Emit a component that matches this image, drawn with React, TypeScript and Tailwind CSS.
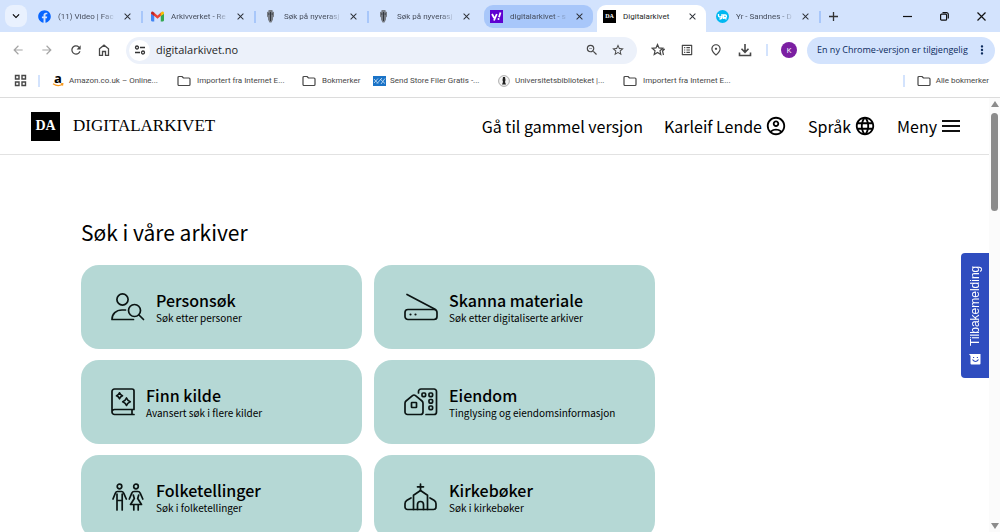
import type { ReactNode } from 'react';
import {
  MdArrowBack,
  MdArrowForward,
  MdClose,
  MdKeyboardArrowDown,
  MdLanguage,
  MdMoreVert,
  MdOutlineAccountCircle,
  MdOutlineListAlt,
  MdOutlinePlace,
  MdRefresh,
  MdStarBorder,
  MdZoomOut,
} from 'react-icons/md';
import { FaFacebook } from 'react-icons/fa';

const GmailIcon = () => (
  <svg viewBox="0 0 24 24" className="size-[13px]">
    <path fill="#4285f4" d="M0 7v12a2 2 0 0 0 2 2h4V10z" />
    <path fill="#34a853" d="M24 7v12a2 2 0 0 1-2 2h-4V10z" />
    <path fill="#ea4335" d="M5 4l7 6 7-6v6l-7 6-7-6z" />
    <path fill="#c5221f" d="M0 6c0-3 3-4 5-2l1 1v6L0 7z" />
    <path fill="#fbbc04" d="M24 6c0-3-3-4-5-2l-1 1v6l6-4z" />
  </svg>
);

const CrestIcon = () => (
  <svg viewBox="0 0 13 13" className="size-[13px]">
    <path fill="#777c84" d="M4.500 0h4v1.500L10 2v4.500L9 7.500v2L7.500 12.500h-2L4 9.500v-2L3 6.500V2l1.500-.5z" />
    <path fill="none" stroke="#31353c" d="M6.500 2v9M4 4h1.500M7.500 4H9" />
  </svg>
);

const YahooIcon = () => (
  <svg viewBox="0 0 13 13" className="size-[13px]">
    <rect width="13" height="13" fill="#5f01d1" />
    <path fill="none" stroke="#fff" strokeWidth="1.800" d="M2 4l2.200 4M6.800 4L4 10.500M10.500 2.500L9 7.300" />
    <circle cx="8.500" cy="9" r="1" fill="#fff" />
  </svg>
);

const DaIcon = () => (
  <span className="flex size-[13px] items-center justify-center bg-black font-['Liberation_Serif',serif] text-[6px] font-bold text-white">
    DA
  </span>
);

const YrIcon = () => (
  <svg viewBox="0 0 13 13" className="size-[13px]">
    <circle cx="6.500" cy="6.500" r="6.500" fill="#00b8f1" />
    <path
      fill="none"
      stroke="#fff"
      strokeWidth="1.300"
      d="M2.500 4v1.500q0 1.500 1.700 1.500T6 5.500V4M6 5v2q0 2-2.500 2M7.500 9V5h1.700q1.300 0 1.300 1.200T9.200 7.500H8l2.500 1.800"
    />
  </svg>
);

const AmazonIcon = () => (
  <span className="flex w-3 flex-col items-center">
    <span className="font-['Open_Sans',sans-serif] text-[13px] leading-[9px] font-bold text-black">a</span>
    <svg viewBox="0 0 12 4" className="h-1 w-3">
      <path fill="none" stroke="#f7981d" strokeWidth="1.200" d="M1 .8q5 3.500 9.500.5M8.800.800l2-.2-.3 2" />
    </svg>
  </span>
);

const FolderIcon = () => (
  <svg viewBox="0 0 14 12" className="h-3 w-3.5">
    <path
      fill="none"
      stroke="#474747"
      strokeWidth="1.200"
      strokeLinejoin="round"
      d="M1 2.500a1 1 0 0 1 1-1h3l1.500 1.500H12a1 1 0 0 1 1 1V9.500a1 1 0 0 1-1 1H2a1 1 0 0 1-1-1z"
    />
  </svg>
);

const SendIcon = () => (
  <svg viewBox="0 0 13 10" className="h-2.5 w-[13px]">
    <rect width="13" height="10" fill="#1a73c7" />
    <path fill="none" stroke="#cfe4f8" strokeWidth=".8" d="M1 3l4 4.500M1 7l4-4.500M4 7.500l5-5.500M7 3l5 4.500M8 8l4-5.500" />
  </svg>
);

const UniversityIcon = () => (
  <svg viewBox="0 0 12 12" className="size-3">
    <circle cx="6" cy="6" r="5.400" fill="#f3f3f3" stroke="#9a9a9a" strokeWidth=".8" />
    <path fill="#222" d="M5 2h2l.5 3-.5 2 1 2.500H4L5 7l-.5-2z" />
  </svg>
);

const AppsIcon = () => (
  <svg viewBox="0 0 13 13" className="size-[13px]">
    <path
      fill="none"
      stroke="#474747"
      strokeWidth="1.400"
      d="M1.500 1.500h3.500v3.500H1.500zM8 1.500h3.500v3.500H8zM1.500 8h3.500v3.500H1.500zM8 8h3.500v3.500H8z"
    />
  </svg>
);

const HomeIcon = () => (
  <svg viewBox="0 0 12 12" className="size-3" fill="none" stroke="#474747" strokeWidth="1.300">
    <path d="M1.500 11.300V4.800L6 1.200l4.500 3.600v6.500H7.500V7.500h-3v3.800z" />
  </svg>
);

const TuneIcon = () => (
  <svg viewBox="0 0 12 12" className="size-3" fill="none" stroke="#333" strokeWidth="1.300">
    <circle cx="3" cy="3.500" r="1.500" />
    <path d="M6 3.500h5M1 8.500h5" />
    <circle cx="9" cy="8.500" r="1.500" />
  </svg>
);

const StarEditIcon = () => (
  <svg viewBox="0 0 14 14" className="size-3.5" fill="none" stroke="#474747" strokeWidth="1.200">
    <path d="M6.500 1.500l1.500 3.400 3.800.4L9 7.800l.8 3.700-3.300-2-3.300 2L4 7.800 1.200 5.300 5 4.900z" />
    <path d="M11 6l2.300.3L11.500 8l1 4" />
  </svg>
);

const DownloadIcon = () => (
  <svg viewBox="0 0 14 14" className="size-3.5" fill="none" stroke="#474747" strokeWidth="1.600">
    <path d="M7 1v8M3.500 5.800L7 9.300l3.500-3.500M1.500 9.500v3h11v-3" />
  </svg>
);

type CardIconProps = { width: number; children: ReactNode };

const CardIcon = ({ width, children }: CardIconProps) => (
  <svg
    width={width}
    height="28"
    viewBox={`0 0 ${width} 28`}
    fill="none"
    stroke="#0b1413"
    strokeWidth="1.700"
    strokeLinecap="round"
    strokeLinejoin="round"
    className="shrink-0"
  >
    {children}
  </svg>
);

const PersonIcon = (
  <CardIcon width={34}>
    <circle cx="11.500" cy="6.500" r="5.600" />
    <path d="M14.500 17H11C5 17 1 21 1 26.500h21.500" />
    <circle cx="23.500" cy="17.500" r="6" />
    <path d="M28 22l4.500 4.500" />
  </CardIcon>
);

const ScannerIcon = (
  <CardIcon width={34}>
    <path d="M3 1.500l28.500 15" />
    <rect x="1" y="16.500" width="32" height="10" rx="3" />
    <path strokeWidth="2.200" d="M6.500 21.500h.01M11.500 21.500h.01" />
  </CardIcon>
);

const BookIcon = (
  <CardIcon width={24}>
    <path d="M23 21.500V3a2 2 0 0 0-2-2H3.500A2.500 2.500 0 0 0 1 3.500V24a2.500 2.500 0 0 0 2.500 2.500H23M1 24a2.500 2.500 0 0 1 2.500-2.500H23M21 21.500v5" />
    <path d="M8.500 4.800q.8 2.200 3 3-2.200.8-3 3-.8-2.200-3-3 2.200-.8 3-3zM15.500 10q1 2.600 3.800 3.700-2.800 1.100-3.800 3.700-1-2.600-3.800-3.700 2.800-1.100 3.800-3.700z" />
  </CardIcon>
);

const PropertyIcon = (
  <CardIcon width={34}>
    <path d="M1 15.200q0-1.400 1-2.200l6.500-5.400q1.500-1.200 3 0l6.500 5.400q1 .8 1 2.200V24a2.500 2.500 0 0 1-2.500 2.500h-13A2.500 2.500 0 0 1 1 24z" />
    <rect x="7.500" y="14.500" width="5" height="5" rx=".5" />
    <path d="M14.500 5V3.500A2.500 2.500 0 0 1 17 1h13a2.500 2.500 0 0 1 2.500 2.500V24a2.500 2.500 0 0 1-2.500 2.500h-8" />
    <rect x="18" y="5" width="3.600" height="3.600" rx="1" />
    <rect x="25" y="5" width="3.600" height="3.600" rx="1" />
    <rect x="25" y="11.500" width="3.600" height="3.600" rx="1" />
    <rect x="25" y="18" width="3.600" height="3.600" rx="1" />
  </CardIcon>
);

const CensusIcon = (
  <CardIcon width={34}>
    <circle cx="8.500" cy="3.500" r="2.300" />
    <path d="M2 16l2.300-5.800Q5 8.500 6.500 8.500h4q1.500 0 2.200 1.700L15.300 16M6 11v16M11.200 11v16M6 17.500h5.200" />
    <circle cx="25" cy="3.500" r="2.300" />
    <path d="M18.300 16l2.500-5.800q.7-1.700 2.200-1.700h4q1.500 0 2.200 1.700L31.800 16M22.300 12l1 3.500-3.800 6h11l-3.800-6 1-3.500M22.800 21.500V27M27.200 21.500V27" />
  </CardIcon>
);

const ChurchIcon = (
  <CardIcon width={34}>
    <path d="M16.500 1v6.500M13.500 3.800h6" />
    <path d="M9.500 26.500V12.300l7-4.800 7 4.800v14.200" />
    <path d="M7 15l-4 2.300q-2 1.200-2 3.400V24a2.500 2.500 0 0 0 2.500 2.500h26A2.500 2.500 0 0 0 32 24v-3.300q0-2.200-2-3.400L26 15" />
    <path d="M13.500 26.500v-5a3 3 0 0 1 6 0v5" />
  </CardIcon>
);

const tabs = [
  { title: '(11) Video | Fac', icon: <FaFacebook className="size-[13px] text-[#0866ff]" />, state: 'idle', line: true },
  { title: 'Arkivverket - Re', icon: <GmailIcon />, state: 'idle', line: true },
  { title: 'Søk på nyverasj', icon: <CrestIcon />, state: 'idle', line: true },
  { title: 'Søk på nyverasj', icon: <CrestIcon />, state: 'idle', line: false },
  { title: 'digitalarkivet - s', icon: <YahooIcon />, state: 'grouped', line: false },
  { title: 'Digitalarkivet', icon: <DaIcon />, state: 'active', line: false },
  { title: 'Yr - Sandnes - D', icon: <YrIcon />, state: 'idle', line: true },
];

const tabStyles: Record<string, string> = {
  idle: 'mb-1',
  grouped: 'mb-1 rounded-[9px] bg-[#a8c7fa]',
  active: 'rounded-t-[9px] bg-white pb-1',
};

const bookmarks = [
  { title: 'Amazon.co.uk – Online...', icon: <AmazonIcon />, width: 'w-[125px]', slot: 'w-[17px]' },
  { title: 'Importert fra Internet E...', icon: <FolderIcon />, width: 'w-[125px]', slot: 'w-5' },
  { title: 'Bokmerker', icon: <FolderIcon />, width: 'w-[71px]', slot: 'w-5' },
  { title: 'Send Store Filer Gratis -...', icon: <SendIcon />, width: 'w-[125px]', slot: 'w-[17px]' },
  { title: 'Universitetsbiblioteket |...', icon: <UniversityIcon />, width: 'w-[125px]', slot: 'w-[17px]' },
  { title: 'Importert fra Internet E...', icon: <FolderIcon />, width: 'w-[125px]', slot: 'w-5' },
];

const cards = [
  { title: 'Personsøk', text: 'Søk etter personer', icon: PersonIcon },
  { title: 'Skanna materiale', text: 'Søk etter digitaliserte arkiver', icon: ScannerIcon },
  { title: 'Finn kilde', text: 'Avansert søk i flere kilder', icon: BookIcon },
  { title: 'Eiendom', text: 'Tinglysing og eiendomsinformasjon', icon: PropertyIcon },
  { title: 'Folketellinger', text: 'Søk i folketellinger', icon: CensusIcon },
  { title: 'Kirkebøker', text: 'Søk i kirkebøker', icon: ChurchIcon },
];

function TabStrip() {
  return (
    <div className="flex h-8 shrink-0 items-stretch bg-[#d3e3fd] pl-[5px] font-[Roboto,sans-serif]">
      <button aria-label="Søk i faner" className="mt-[5px] mr-[3px] flex size-[22px] items-center justify-center rounded-lg bg-[#e9f1fe]">
        <MdKeyboardArrowDown className="size-3.5" />
      </button>
      {tabs.map((tab, index) => (
        <div key={index} className="flex w-[113px] shrink-0 pt-[5px]">
          <div className={`ml-0.5 flex w-[109px] items-center pl-1.5 ${tabStyles[tab.state]}`}>
            <span className="flex w-5 shrink-0">{tab.icon}</span>
            <button
              className={`w-[58px] text-left text-[8px] whitespace-nowrap ${
                tab.state === 'active'
                  ? 'text-[#1f1f1f]'
                  : 'bg-linear-to-r from-[#3f4654] from-75% to-transparent bg-clip-text text-transparent'
              }`}
            >
              {tab.title}
            </button>
            <button aria-label="Lukk" className="ml-1.5 flex">
              <MdClose className="size-[11px] text-[#2b2f36]" />
            </button>
          </div>
          {tab.line && <div className="mb-1 h-3 w-0.5 self-center bg-[#a8c7fa]" />}
        </div>
      ))}
      <button aria-label="Ny fane" className="ml-2 flex items-center">
        <svg viewBox="0 0 9 9" className="size-[9px]" stroke="#333" strokeWidth="1.300">
          <path d="M4.500 0v9M0 4.500h9" />
        </svg>
      </button>
      <div className="ml-auto flex items-center gap-7 pr-3.5">
        <button aria-label="Minimer">
          <svg viewBox="0 0 9 9" className="size-[9px]" stroke="#111" strokeWidth="1.200">
            <path d="M0 4.500h9" />
          </svg>
        </button>
        <button aria-label="Gjenopprett">
          <svg viewBox="0 0 9 9" className="size-[9px]" fill="none" stroke="#111" strokeWidth="1.200">
            <rect x=".6" y="2.200" width="6" height="6" rx="1" />
            <path d="M2.500.6h4a1.800 1.800 0 0 1 1.800 1.800v4" />
          </svg>
        </button>
        <button aria-label="Lukk vindu">
          <svg viewBox="0 0 9 9" className="size-[9px]" stroke="#111" strokeWidth="1.200">
            <path d="M.5.500l8 8M8.500.500l-8 8" />
          </svg>
        </button>
      </div>
    </div>
  );
}

function Toolbar() {
  return (
    <div className="flex h-9 shrink-0 items-center pr-[5px] pl-[11px] text-[#474747]">
      <div className="flex w-[115px] gap-[15px]">
        <button aria-label="Tilbake" className="text-[#a5a5a5]"><MdArrowBack className="size-3.5" /></button>
        <button aria-label="Frem" className="text-[#a5a5a5]"><MdArrowForward className="size-3.5" /></button>
        <button aria-label="Last inn på nytt"><MdRefresh className="size-3.5" /></button>
        <button aria-label="Startside"><HomeIcon /></button>
      </div>
      <div className="flex h-[27px] min-w-0 flex-1 items-center rounded-full bg-[#ecf1fa] pr-3 pl-[3px]">
        <button aria-label="Nettstedinformasjon" className="flex size-[21px] shrink-0 items-center justify-center rounded-full bg-white">
          <TuneIcon />
        </button>
        <input
          aria-label="Adresse"
          defaultValue="digitalarkivet.no"
          className="ml-1.5 min-w-0 flex-1 bg-transparent text-[11px] text-[#1f1f1f] outline-none"
        />
        <button aria-label="Zoom"><MdZoomOut className="size-3.5" /></button>
        <button aria-label="Legg til bokmerke" className="ml-3"><MdStarBorder className="size-3.5" /></button>
      </div>
      <div className="ml-3.5 flex items-center gap-[15px]">
        <button aria-label="Bokmerker"><StarEditIcon /></button>
        <button aria-label="Leseliste"><MdOutlineListAlt className="size-3.5" /></button>
        <button aria-label="Sted"><MdOutlinePlace className="size-3.5" /></button>
        <button aria-label="Nedlastinger"><DownloadIcon /></button>
      </div>
      <div className="ml-3.5 h-3 w-0.5 bg-[#d3e3fd]" />
      <button className="ml-[13px] size-4 rounded-full bg-[#7b1fa2] text-[8px] text-white">K</button>
      <button className="ml-2.5 flex h-[27px] w-[188px] items-center justify-between rounded-full bg-[#d3e3fd] pr-1.5 pl-2.5 text-[9px] font-medium whitespace-nowrap text-[#0b2a5c]">
        En ny Chrome-versjon er tilgjengelig
        <MdMoreVert className="size-3.5 shrink-0" />
      </button>
    </div>
  );
}

function BookmarkBar() {
  return (
    <nav className="flex h-[30px] shrink-0 items-center border-b border-[#dcdcdc] pr-[11px] pb-1 pl-3.5 font-[Roboto,sans-serif] text-[8px] whitespace-nowrap text-[#474747]">
      <button aria-label="Apper"><AppsIcon /></button>
      <div className="mr-3 ml-[11px] h-3 w-0.5 bg-[#d3e3fd]" />
      {bookmarks.map((bookmark, index) => (
        <a key={index} href="#" className={`flex shrink-0 items-center ${bookmark.width}`}>
          <span className={`flex shrink-0 ${bookmark.slot}`}>{bookmark.icon}</span>
          {bookmark.title}
        </a>
      ))}
      <div className="mr-3 ml-auto h-3 w-0.5 bg-[#d3e3fd]" />
      <a href="#" className="flex items-center gap-[5px]">
        <FolderIcon />
        Alle bokmerker
      </a>
    </nav>
  );
}

function SiteHeader() {
  return (
    <header className="flex h-[57px] items-center justify-between border-b border-[#e2e2e2] pr-[29px] pl-[31px]">
      <a href="#" className="flex items-center gap-[13px] font-['Liberation_Serif',serif]">
        <span className="flex size-[29px] items-center justify-center bg-black text-sm font-bold text-white">DA</span>
        <span className="text-[17px]">DIGITALARKIVET</span>
      </a>
      <nav className="flex items-center gap-[21px] text-[16px]">
        <a href="#">Gå til gammel versjon</a>
        <button className="flex items-center gap-[3px]">
          Karleif Lende <MdOutlineAccountCircle className="size-[22px]" />
        </button>
        <button className="flex items-center gap-[3px]">
          Språk <MdLanguage className="size-[22px]" />
        </button>
        <button className="flex items-center gap-[5px]">
          Meny
          <svg viewBox="0 0 18 14" className="h-3.5 w-[18px]" stroke="#111" strokeWidth="2">
            <path d="M0 2h18M0 7h18M0 12h18" />
          </svg>
        </button>
      </nav>
    </header>
  );
}

function SearchCards() {
  return (
    <section className="px-[81px] pt-[61px]">
      <h1 className="text-[21px] leading-8">Søk i våre arkiver</h1>
      <div className="mt-[17px] grid max-w-[574px] grid-cols-2 gap-x-3 gap-y-[11px]">
        {cards.map((card) => (
          <a key={card.title} href="#" className="flex h-[84px] items-center gap-[11px] rounded-[18px] bg-[#b5d8d5] pl-[30px]">
            {card.icon}
            <span className="flex flex-col pt-0.5">
              <span className="text-[16px] leading-5 font-medium">{card.title}</span>
              <span className="text-[10px] leading-4">{card.text}</span>
            </span>
          </a>
        ))}
      </div>
    </section>
  );
}

function FeedbackButton() {
  return (
    <button className="absolute top-[155px] right-0 flex h-[125px] w-7 rotate-180 items-center justify-center gap-[7px] rounded-r-[4px] bg-[#2f4dbf] font-['Liberation_Sans',sans-serif] text-[12px] text-white [writing-mode:vertical-rl]">
      <svg viewBox="0 0 12 12" className="size-3 shrink-0 rotate-180">
        <path fill="#fff" d="M0 1h11.500v9.500a1 1 0 0 1-1 1H2.500a1 1 0 0 1-1-1V3z" />
        <path fill="none" stroke="#2f4dbf" strokeWidth="1.200" d="M3.500 6.500q3 4 6 0M4 4.500h1.200M7.800 4.500H9" />
      </svg>
      Tilbakemelding
    </button>
  );
}

function Scrollbar() {
  return (
    <div aria-hidden="true" className="flex w-[11px] shrink-0 flex-col items-center justify-between bg-[#fbfbfb] py-[3px]">
      <div className="flex flex-col items-center gap-1.5">
        <svg viewBox="0 0 8 6" className="h-1.5 w-2" fill="#8b8b8b"><path d="M4 0l4 6H0z" /></svg>
        <div className="h-[98px] w-[7px] rounded-full bg-[#8b8b8b]" />
      </div>
      <svg viewBox="0 0 8 6" className="h-1.5 w-2" fill="#8b8b8b"><path d="M0 0h8L4 6z" /></svg>
    </div>
  );
}

export default function App() {
  return (
    <div className="flex h-screen flex-col overflow-hidden bg-white font-['Open_Sans',sans-serif]">
      <TabStrip />
      <Toolbar />
      <BookmarkBar />
      <div className="flex min-h-0 flex-1">
        <main className="relative min-w-0 flex-1 overflow-hidden font-['Noto_Sans_CJK_SC',sans-serif] text-black">
          <SiteHeader />
          <SearchCards />
          <FeedbackButton />
        </main>
        <Scrollbar />
      </div>
    </div>
  );
}
